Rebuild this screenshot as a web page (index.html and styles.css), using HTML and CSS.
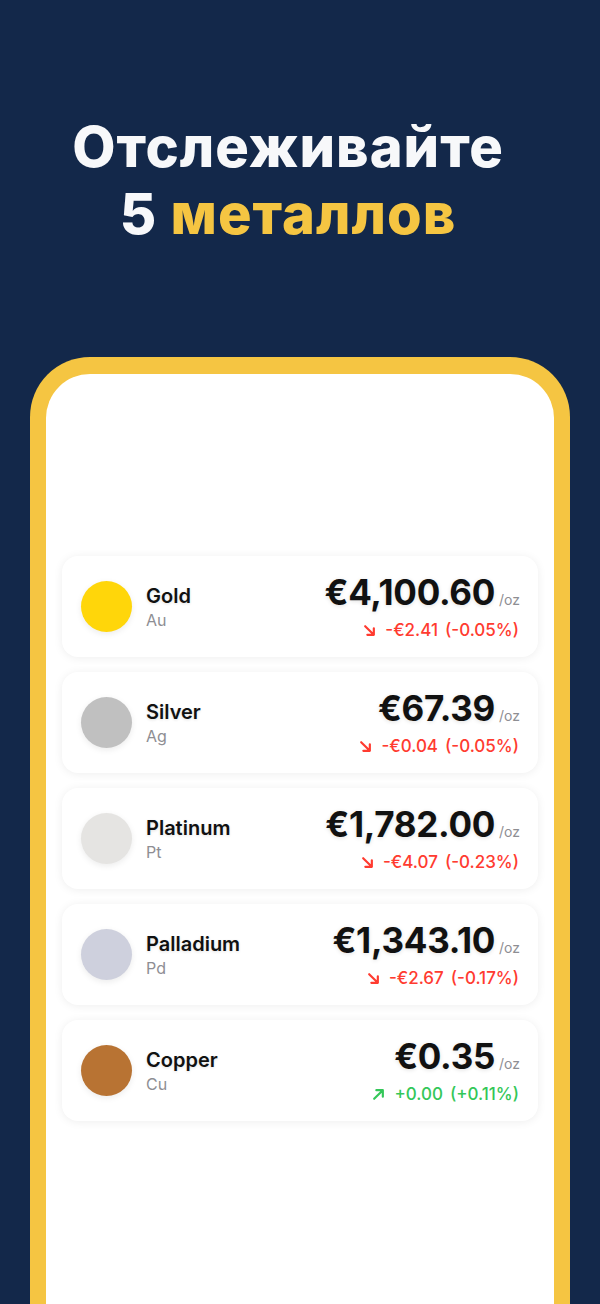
FILE: index.html
```html
<!DOCTYPE html>
<html lang="ru">
<head>
  <meta charset="UTF-8" />
  <meta name="viewport" content="width=device-width, initial-scale=1.0"/>
  <title>Отслеживайте 5 металлов</title>
  <link rel="stylesheet" href="styles.css">
</head>
<body>
  <header class="hero">
    <h1>Отслеживайте<br><span class="num">5</span> <span class="accent">металлов</span></h1>
  </header>

  <div class="phone">
    <div class="screen">
      <div class="list">

        <div class="card">
          <div class="dot gold"></div>
          <div class="name">
            <div class="title">Gold</div>
            <div class="sym">Au</div>
          </div>
          <div class="quote">
            <div class="price">€4,100.60<span class="unit">/oz</span></div>
            <div class="change down">
              <svg class="arrow" viewBox="0 0 12 12"><path d="M2 2 L10 10 M10 4 V10 H4"/></svg>
              <span>-€2.41</span><span>(-0.05%)</span>
            </div>
          </div>
        </div>

        <div class="card">
          <div class="dot silver"></div>
          <div class="name">
            <div class="title">Silver</div>
            <div class="sym">Ag</div>
          </div>
          <div class="quote">
            <div class="price">€67.39<span class="unit">/oz</span></div>
            <div class="change down">
              <svg class="arrow" viewBox="0 0 12 12"><path d="M2 2 L10 10 M10 4 V10 H4"/></svg>
              <span>-€0.04</span><span>(-0.05%)</span>
            </div>
          </div>
        </div>

        <div class="card">
          <div class="dot platinum"></div>
          <div class="name">
            <div class="title">Platinum</div>
            <div class="sym">Pt</div>
          </div>
          <div class="quote">
            <div class="price">€1,782.00<span class="unit">/oz</span></div>
            <div class="change down">
              <svg class="arrow" viewBox="0 0 12 12"><path d="M2 2 L10 10 M10 4 V10 H4"/></svg>
              <span>-€4.07</span><span>(-0.23%)</span>
            </div>
          </div>
        </div>

        <div class="card">
          <div class="dot palladium"></div>
          <div class="name">
            <div class="title">Palladium</div>
            <div class="sym">Pd</div>
          </div>
          <div class="quote">
            <div class="price">€1,343.10<span class="unit">/oz</span></div>
            <div class="change down">
              <svg class="arrow" viewBox="0 0 12 12"><path d="M2 2 L10 10 M10 4 V10 H4"/></svg>
              <span>-€2.67</span><span>(-0.17%)</span>
            </div>
          </div>
        </div>

        <div class="card">
          <div class="dot copper"></div>
          <div class="name">
            <div class="title">Copper</div>
            <div class="sym">Cu</div>
          </div>
          <div class="quote">
            <div class="price">€0.35<span class="unit">/oz</span></div>
            <div class="change up">
              <svg class="arrow" viewBox="0 0 12 12"><path d="M2 10 L10 2 M4 2 H10 V8"/></svg>
              <span>+0.00</span><span>(+0.11%)</span>
            </div>
          </div>
        </div>

      </div>
    </div>
  </div>
</body>
</html>
```

FILE: styles.css
```css
* {
  box-sizing: border-box;
}
html, body {
  height: 100%;
}
body {
  margin: 0;
  background: #13284a;
  font-family: Inter, 'Noto Sans', sans-serif;
  color: #111;
  overflow: hidden;
  display: flex;
  flex-direction: column;
}
.hero {
  padding: 114px 24px 0 0;
  text-align: center;
}
.hero h1 {
  margin: 0;
  font-size: 56px;
  line-height: 67px;
  font-weight: 800;
  color: #f7f8fa;
  letter-spacing: 1px;
}
.hero .accent {
  color: #f5c542;
}
.phone {
  flex: 1;
  width: 540px;
  margin: 109px auto 0;
  border: 16px solid #f5c542;
  border-top-width: 17px;
  border-bottom: none;
  border-radius: 60px 60px 0 0;
  background: #f5c542;
}
.screen {
  height: 100%;
  background: #fff;
  border-radius: 44px 44px 0 0;
  padding: 182px 16px 0;
}
.list {
  display: flex;
  flex-direction: column;
  gap: 15px;
}
.card {
  height: 101px;
  background: #fff;
  border-radius: 16px;
  box-shadow: 0 1px 10px rgba(0, 0, 0, 0.07);
  display: flex;
  align-items: center;
  padding: 0 18px 0 19px;
}
.dot {
  width: 51px;
  height: 51px;
  border-radius: 50%;
  flex: none;
  box-shadow: 0 2px 6px rgba(0, 0, 0, 0.08);
}
.gold { background: #ffd60a; }
.silver { background: #c0c0c0; }
.platinum { background: #e5e4e2; }
.palladium { background: #ced0dd; }
.copper { background: #b87333; }
.name {
  margin-left: 14px;
  flex: 1;
}
.title {
  font-size: 20px;
  font-weight: 600;
  line-height: 24px;
  text-shadow: 0 1px 3px rgba(0, 0, 0, 0.12);
}
.sym {
  margin-top: 2px;
  font-size: 16px;
  line-height: 20px;
  color: #8e8e93;
}
.quote {
  text-align: right;
  margin-top: 1px;
}
.price {
  font-size: 35px;
  font-weight: 700;
  line-height: 38px;
  letter-spacing: -0.3px;
  text-shadow: 0 1px 4px rgba(0, 0, 0, 0.12);
}
.unit {
  font-size: 14px;
  font-weight: 400;
  color: #8e8e93;
  margin-left: 4px;
  letter-spacing: 0;
  text-shadow: none;
}
.change {
  display: flex;
  justify-content: flex-end;
  align-items: center;
  gap: 7px;
  margin-top: 0;
  padding-right: 1px;
  font-size: 17px;
  font-weight: 500;
  line-height: 22px;
}
.change .arrow {
  width: 13px;
  height: 13px;
  margin-right: 2px;
  fill: none;
  stroke: currentColor;
  stroke-width: 2;
  stroke-linecap: round;
  stroke-linejoin: round;
}
.down { color: #ff3b30; }
.up { color: #34c759; }
```
